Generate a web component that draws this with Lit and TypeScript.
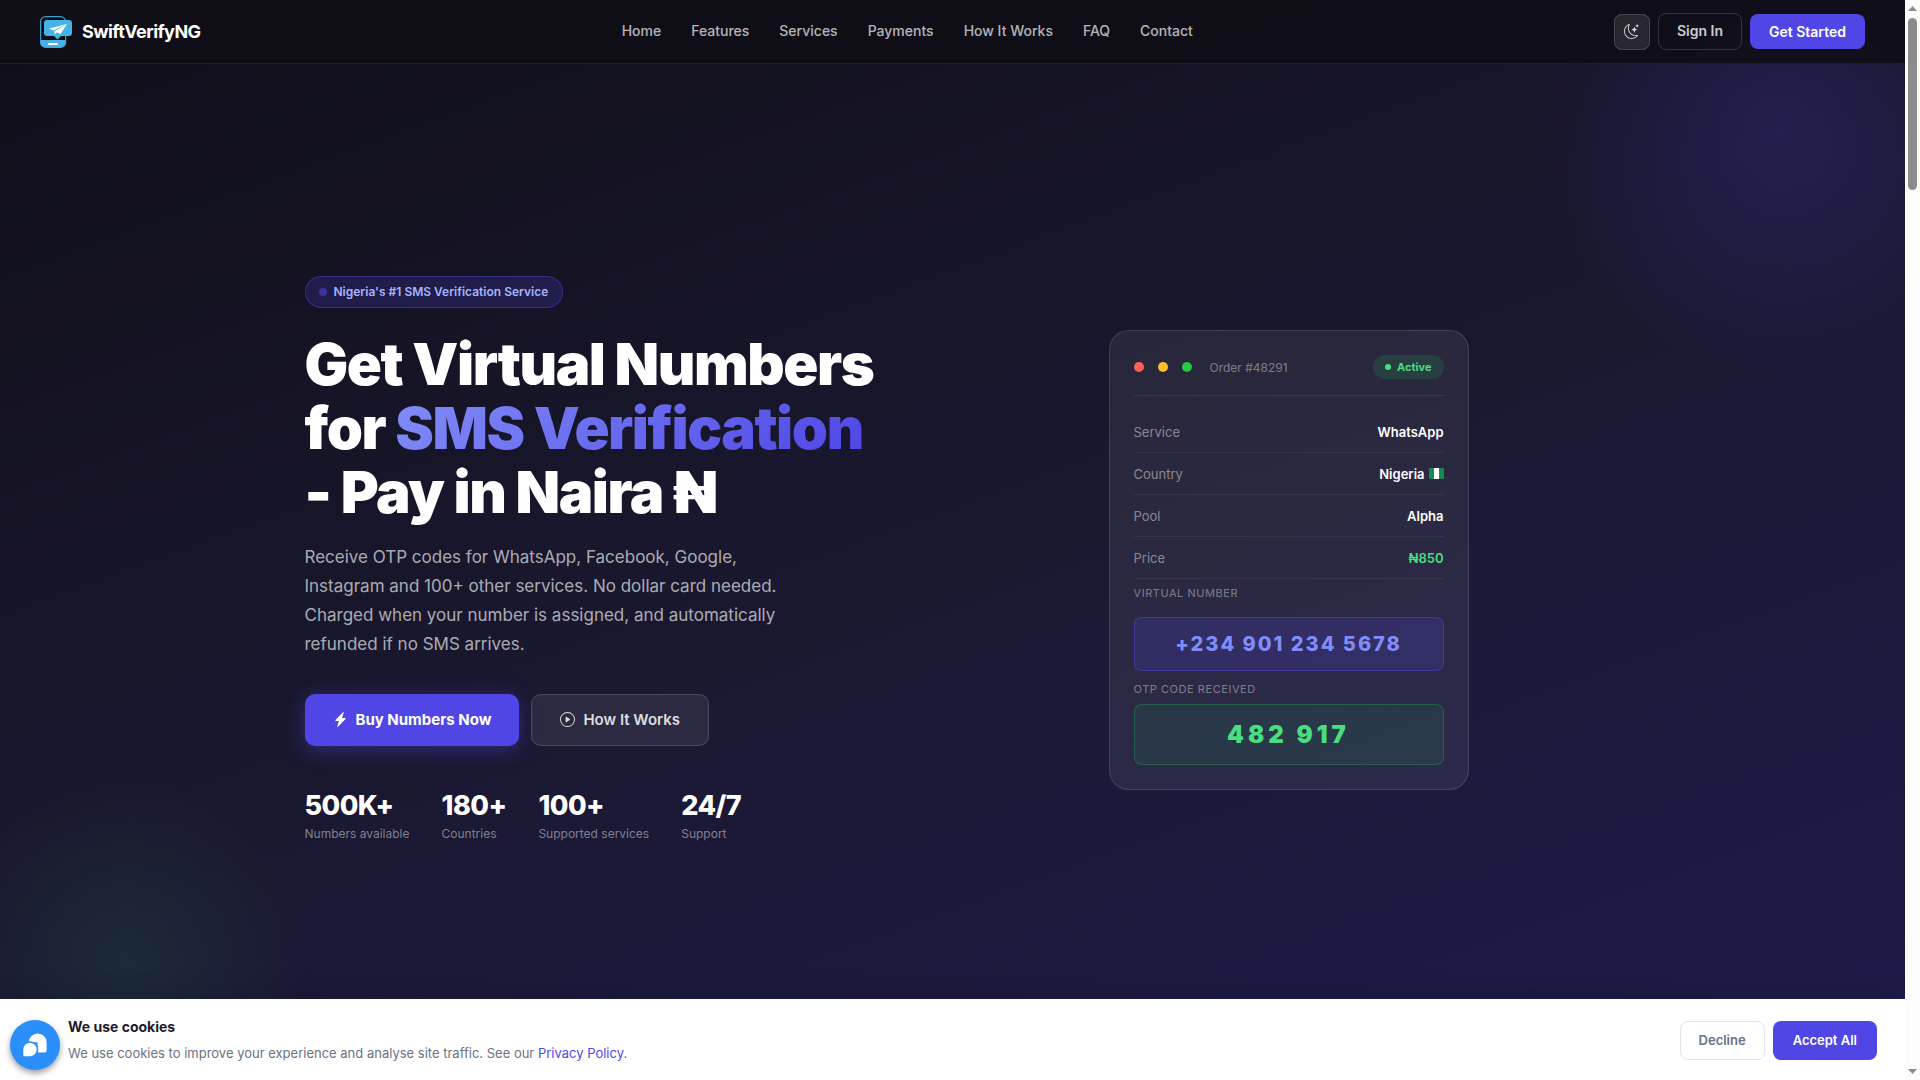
import { LitElement, html, css, svg } from "lit";
import { customElement } from "lit/decorators.js";

const icon = (name: string, body: unknown) => html`
  <svg class="icon ${name}" viewBox="0 0 16 16" fill="currentColor" aria-hidden="true">${body}</svg>`;

const moon = svg`
  <path d="M6 .278a.77.77 0 0 1 .08.858 7.2 7.2 0 0 0-.878 3.46c0 4.021 3.278 7.277 7.318 7.277q.792-.001 1.533-.16a.79.79 0 0 1 .81.316.73.73 0 0 1-.031.893A8.35 8.35 0 0 1 8.344 16C3.734 16 0 12.286 0 7.71 0 4.266 2.114 1.312 5.124.06A.75.75 0 0 1 6 .278M4.858 1.311A7.27 7.27 0 0 0 1.025 7.71c0 4.02 3.279 7.276 7.319 7.276a7.32 7.32 0 0 0 5.205-2.162q-.506.063-1.029.063c-4.61 0-8.343-3.714-8.343-8.29 0-1.167.242-2.278.681-3.286"/>
  <path d="M10.794 3.148a.217.217 0 0 1 .412 0l.387 1.162c.173.518.579.924 1.097 1.097l1.162.387a.217.217 0 0 1 0 .412l-1.162.387a1.73 1.73 0 0 0-1.097 1.097l-.387 1.162a.217.217 0 0 1-.412 0l-.387-1.162A1.73 1.73 0 0 0 9.31 6.593l-1.162-.387a.217.217 0 0 1 0-.412l1.162-.387a1.73 1.73 0 0 0 1.097-1.097zM13.863.099a.145.145 0 0 1 .274 0l.258.774c.115.346.386.617.732.732l.774.258a.145.145 0 0 1 0 .274l-.774.258a1.16 1.16 0 0 0-.732.732l-.258.774a.145.145 0 0 1-.274 0l-.258-.774a1.16 1.16 0 0 0-.732-.732l-.774-.258a.145.145 0 0 1 0-.274l.774-.258c.346-.115.617-.386.732-.732z"/>`;
const bolt = svg`<path d="M11.251.068a.5.5 0 0 1 .227.58L9.677 6.5H13a.5.5 0 0 1 .364.843l-8 8.5a.5.5 0 0 1-.842-.49L6.323 9.5H3a.5.5 0 0 1-.364-.843l8-8.5a.5.5 0 0 1 .615-.09z"/>`;
const play = svg`
  <path d="M8 15A7 7 0 1 1 8 1a7 7 0 0 1 0 14m0 1A8 8 0 1 0 8 0a8 8 0 0 0 0 16"/>
  <path d="M6.271 5.055a.5.5 0 0 1 .52.038l3.5 2.5a.5.5 0 0 1 0 .814l-3.5 2.5A.5.5 0 0 1 6 10.5v-5a.5.5 0 0 1 .271-.445"/>`;

const NAV = ["Home", "Features", "Services", "Payments", "How It Works", "FAQ", "Contact"];
const STATS = [
  ["500K+", "Numbers available"],
  ["180+", "Countries"],
  ["100+", "Supported services"],
  ["24/7", "Support"],
];

@customElement("app-root")
export class AppRoot extends LitElement {
  static styles = css`
    :host {
      display: grid;
      grid-template-columns: minmax(0, 1fr) 15px;
      height: 100vh;
      overflow: hidden;
      font-family: Inter, "Liberation Sans", sans-serif;
      color: #fff;
    }
    * { box-sizing: border-box; }
    a { color: inherit; text-decoration: none; }
    button { font: inherit; cursor: pointer; }
    h1, p, dl, dd { margin: 0; }
    .icon { flex: none; width: 15px; height: 15px; }

    .page { position: relative; display: grid; overflow: hidden; }

    .header {
      position: absolute;
      inset: 0 0 auto;
      z-index: 2;
      display: flex;
      align-items: center;
      justify-content: space-between;
      height: 64px;
      padding: 0 40px;
      background: rgba(15, 14, 23, 0.92);
      border-bottom: 1px solid rgba(255, 255, 255, 0.06);
    }
    .brand { display: flex; align-items: center; gap: 10px; font-size: 18px; font-weight: 700; letter-spacing: -0.03em; }
    .brand-mark { width: 32px; height: 32px; }
    .nav { display: flex; gap: 30px; padding-bottom: 2px; font-size: 14px; font-weight: 500; color: rgba(255, 255, 255, 0.7); }
    .actions { display: flex; align-items: center; gap: 8px; font-size: 14px; font-weight: 600; }
    .theme {
      display: grid;
      place-items: center;
      width: 36px;
      height: 36px;
      padding: 0;
      border-radius: 8px;
      border: 1px solid rgba(255, 255, 255, 0.15);
      background: rgba(255, 255, 255, 0.1);
      color: rgba(255, 255, 255, 0.8);
    }
    .signin, .start { display: flex; align-items: center; padding: 0 18px 2px; border-radius: 8px; }
    .signin { height: 37px; border: 1px solid rgba(255, 255, 255, 0.15); color: rgba(255, 255, 255, 0.8); }
    .start { height: 35px; padding: 0 19px 1px; background: #4f46e5; }

    .hero {
      display: grid;
      align-content: center;
      justify-items: center;
      padding: 120px 24px 80px;
      background:
        radial-gradient(circle 245px at calc(100% - 125px) 130px, rgba(79, 70, 229, 0.18), transparent),
        radial-gradient(circle 180px at 125px calc(100% - 120px), rgba(34, 197, 94, 0.1), transparent),
        linear-gradient(160deg, #0f0e17 0%, #1a1830 50%, #1e1b4b 100%);
    }
    .hero-grid {
      display: grid;
      grid-template-columns: 1fr 1fr;
      gap: 48px;
      align-items: center;
      width: 100%;
      max-width: 1296px;
    }
    .copy { display: flex; flex-direction: column; align-items: flex-start; }
    .badge {
      display: flex;
      align-items: center;
      gap: 7px;
      height: 32px;
      padding: 0 14px 0 13px;
      margin-bottom: 24px;
      border-radius: 16px;
      border: 1px solid rgba(79, 70, 229, 0.4);
      background: rgba(79, 70, 229, 0.2);
      color: #a5b4fc;
      font-size: 12px;
      font-weight: 600;
    }
    .badge-dot { width: 8px; height: 8px; border-radius: 50%; background: #3d329e; }
    .title { font-size: 58px; line-height: 64px; font-weight: 900; letter-spacing: -0.025em; margin-bottom: 19px; }
    .line { display: block; }
    .accent {
      display: inline-block;
      background: linear-gradient(135deg, #818cf8, #4f46e5);
      -webkit-background-clip: text;
      background-clip: text;
      color: transparent;
    }
    .lead { max-width: 480px; font-size: 17px; line-height: 29px; color: rgba(255, 255, 255, 0.65); margin-bottom: 35px; }
    .cta { display: flex; gap: 12px; margin-bottom: 40px; }
    .btn {
      display: flex;
      align-items: center;
      gap: 8px;
      height: 52px;
      padding: 0 28px;
      border-radius: 10px;
      font-size: 15px;
      font-weight: 700;
    }
    .buy { background: #4f46e5; box-shadow: 0 4px 20px rgba(79, 70, 229, 0.4); }
    .how { border: 1px solid rgba(255, 255, 255, 0.15); background: rgba(255, 255, 255, 0.08); color: rgba(255, 255, 255, 0.85); font-weight: 600; }
    .stats { display: flex; gap: 32px; padding-bottom: 3px; }
    .stat { display: flex; flex-direction: column-reverse; }
    .stat-value { font-size: 27px; line-height: 40px; font-weight: 800; letter-spacing: -0.02em; }
    .stat-label { font-size: 12px; line-height: 16px; color: rgba(255, 255, 255, 0.45); }

    .card {
      justify-self: center;
      width: 100%;
      max-width: 360px;
      padding: 24px;
      border-radius: 20px;
      border: 1px solid rgba(255, 255, 255, 0.12);
      background: rgba(255, 255, 255, 0.07);
    }
    .card-head {
      display: flex;
      align-items: center;
      gap: 14px;
      padding-bottom: 16px;
      margin-bottom: 15px;
      border-bottom: 1px solid rgba(255, 255, 255, 0.08);
    }
    .dot { width: 10px; height: 10px; border-radius: 50%; }
    .red { background: #ff5f57; }
    .amber { background: #febc2e; }
    .green { background: #28c840; }
    .order { margin-left: 4px; font-size: 12px; color: rgba(255, 255, 255, 0.4); }
    .active {
      display: flex;
      align-items: center;
      gap: 6px;
      height: 24px;
      margin-left: auto;
      padding: 0 12px;
      border-radius: 12px;
      background: rgba(34, 197, 94, 0.15);
      color: #4ade80;
      font-size: 11px;
      font-weight: 700;
    }
    .active-dot { width: 6px; height: 6px; border-radius: 50%; background: #4ade80; }
    .row {
      display: flex;
      align-items: center;
      justify-content: space-between;
      height: 42px;
      border-bottom: 1px solid rgba(255, 255, 255, 0.06);
      font-size: 13px;
    }
    .key { color: rgba(255, 255, 255, 0.45); }
    .value { display: flex; align-items: center; gap: 4px; font-weight: 600; }
    .price { color: #4ade80; }
    .flag { width: 15px; height: 11px; }
    .caption { font-size: 11px; line-height: 16px; letter-spacing: 0.05em; color: rgba(255, 255, 255, 0.4); }
    .number-caption { margin: 6px 0 16px; }
    .otp-caption { margin: 10px 0 7px; }
    .box { display: grid; place-items: center; border-radius: 8px; font-weight: 800; }
    .number { height: 54px; border: 1px solid rgba(79, 70, 229, 0.45); background: rgba(79, 70, 229, 0.2); color: #818cf8; font-size: 20px; letter-spacing: 2px; }
    .otp { height: 61px; border: 1px solid rgba(34, 197, 94, 0.28); background: rgba(34, 197, 94, 0.1); color: #4ade80; font-size: 24px; font-weight: 900; letter-spacing: 4px; }

    .cookies {
      position: absolute;
      inset: auto 0 0;
      z-index: 2;
      display: flex;
      align-items: center;
      justify-content: space-between;
      height: 81px;
      padding: 1px 28px 0 68px;
      background: #fff;
      box-shadow: 0 -4px 24px rgba(0, 0, 0, 0.12);
      color: #6b7280;
    }
    .cookie-text { font-size: 13px; line-height: 21px; }
    .cookie-title { margin-bottom: 6px; font-size: 14px; line-height: 20px; font-weight: 700; color: #1e1b2e; }
    .cookie-link { color: #4f46e5; }
    .cookie-actions { display: flex; gap: 8px; }
    .cookie-btn { height: 39px; padding: 0 20px; border: 0; border-radius: 8px; font-size: 13px; font-weight: 600; background: #4f46e5; color: #fff; }
    .decline { padding: 0 18px; border: 1px solid #e2e4ea; background: #fff; color: #64748b; }
    .chat {
      position: absolute;
      left: 10px;
      bottom: 10px;
      z-index: 3;
      display: grid;
      place-items: center;
      width: 50px;
      height: 50px;
      padding: 0;
      border: 0;
      border-radius: 50%;
      background: #2b8ffb;
      box-shadow: 0 3px 6px rgba(0, 0, 0, 0.4);
    }
    .chat-icon { width: 24px; height: 24px; }

    .scroll { display: flex; flex-direction: column; align-items: center; justify-content: space-between; padding: 6px 0; background: #fcfcfc; }
    .scroll-top { display: flex; flex-direction: column; align-items: center; gap: 7px; }
    .arrow { width: 9px; height: 5px; flex: none; }
    .thumb { width: 9px; height: 172px; border-radius: 5px; background: #8b8b8b; }
  `;

  private row(key: string, value: unknown, extra = "") {
    return html`<div class="row"><dt class="key">${key}</dt><dd class="value ${extra}">${value}</dd></div>`;
  }

  render() {
    return html`
      <div class="page">
        <header class="header">
          <a class="brand" href="#">
            <svg class="brand-mark" viewBox="0 0 32 32" aria-hidden="true">
              <rect x=".6" y=".6" width="25" height="30.8" rx="5" fill="#0f0e17" stroke="#3d9cc9" stroke-width="1.2"/>
              <path d="M.6 24H25.6V26.4a5 5 0 0 1-5 5H5.600a5 5 0 0 1-5-5z" fill="#45b3e6"/>
              <path d="M7 4H29a3 3 0 0 1 3 3V17a3 3 0 0 1-3 3H21L17.500 23.500 14 20H7a3 3 0 0 1-3-3V7a3 3 0 0 1 3-3z" fill="#45b3e6"/>
              <path d="M27 8 9 12.500 13.500 14.600zM27 8 14.500 15.200V18.500L17 16.300 20.500 18z" fill="#fff"/>
              <rect x="8" y="27" width="10" height="2" rx="1" fill="#fff"/>
            </svg>
            <span>SwiftVerifyNG</span>
          </a>
          <nav class="nav">${NAV.map((n) => html`<a href="#">${n}</a>`)}</nav>
          <div class="actions">
            <button class="theme" aria-label="Toggle theme">${icon("moon", moon)}</button>
            <a class="signin" href="#">Sign In</a>
            <a class="start" href="#">Get Started</a>
          </div>
        </header>

        <main class="hero">
          <div class="hero-grid">
            <section class="copy">
              <div class="badge"><span class="badge-dot"></span>Nigeria's #1 SMS Verification Service</div>
              <h1 class="title">
                <span class="line">Get Virtual Numbers</span>
                <span class="line">for <span class="accent">SMS Verification</span></span>
                <span class="line">- Pay in Naira ₦</span>
              </h1>
              <p class="lead">
                Receive OTP codes for WhatsApp, Facebook, Google, Instagram and 100+ other services. No dollar card
                needed. Charged when your number is assigned, and automatically refunded if no SMS arrives.
              </p>
              <div class="cta">
                <a class="btn buy" href="#">${icon("bolt", bolt)}Buy Numbers Now</a>
                <a class="btn how" href="#">${icon("play", play)}How It Works</a>
              </div>
              <dl class="stats">
                ${STATS.map(([value, label]) => html`
                  <div class="stat"><dt class="stat-label">${label}</dt><dd class="stat-value">${value}</dd></div>`)}
              </dl>
            </section>

            <section class="card">
              <div class="card-head">
                <span class="dot red"></span><span class="dot amber"></span><span class="dot green"></span>
                <span class="order">Order #48291</span>
                <span class="active"><span class="active-dot"></span>Active</span>
              </div>
              <dl>
                ${this.row("Service", "WhatsApp")}
                ${this.row("Country", html`Nigeria
                  <svg class="flag" viewBox="0 0 15 11" role="img" aria-label="Nigerian flag">
                    <rect width="15" height="11" rx="1" fill="#128a52"/><rect x="5" width="5" height="11" fill="#fff"/>
                  </svg>`)}
                ${this.row("Pool", "Alpha")}
                ${this.row("Price", "₦850", "price")}
              </dl>
              <p class="caption number-caption">VIRTUAL NUMBER</p>
              <div class="box number">+234 901 234 5678</div>
              <p class="caption otp-caption">OTP CODE RECEIVED</p>
              <div class="box otp">482 917</div>
            </section>
          </div>
        </main>

        <aside class="cookies" aria-label="Cookie notice">
          <div class="cookie-text">
            <p class="cookie-title">We use cookies</p>
            <p>We use cookies to improve your experience and analyse site traffic. See our <a class="cookie-link" href="#">Privacy Policy</a>.</p>
          </div>
          <div class="cookie-actions">
            <button class="cookie-btn decline">Decline</button>
            <button class="cookie-btn">Accept All</button>
          </div>
        </aside>
        <button class="chat" aria-label="Open chat">
          <svg class="chat-icon" viewBox="0 0 24 24" fill="#fff" aria-hidden="true">
            <path d="M5.800 9.300A8.900 8.900 0 0 1 23.600 9.300V17.500Q23.600 19.600 21.500 19.600H14.500V9.300z"/>
            <path d="M7 8.200A8.300 8.300 0 0 1 14.200 20.600L5 21 4 9.300Q5 8.200 7 8.200z" fill="#2b8ffb"/>
            <path d="M.3 16.500A6.700 6.700 0 1 1 7 23.200H1.300Q.3 23.200.3 22.200z"/>
          </svg>
        </button>
      </div>
      <div class="scroll" aria-hidden="true">
        <div class="scroll-top">
          <svg class="arrow" viewBox="0 0 9 5"><path d="M0 5 4.500 0 9 5z" fill="#8b8b8b"/></svg>
          <div class="thumb"></div>
        </div>
        <svg class="arrow" viewBox="0 0 9 5"><path d="M0 0 4.500 5 9 0z" fill="#8b8b8b"/></svg>
      </div>
    `;
  }
}
